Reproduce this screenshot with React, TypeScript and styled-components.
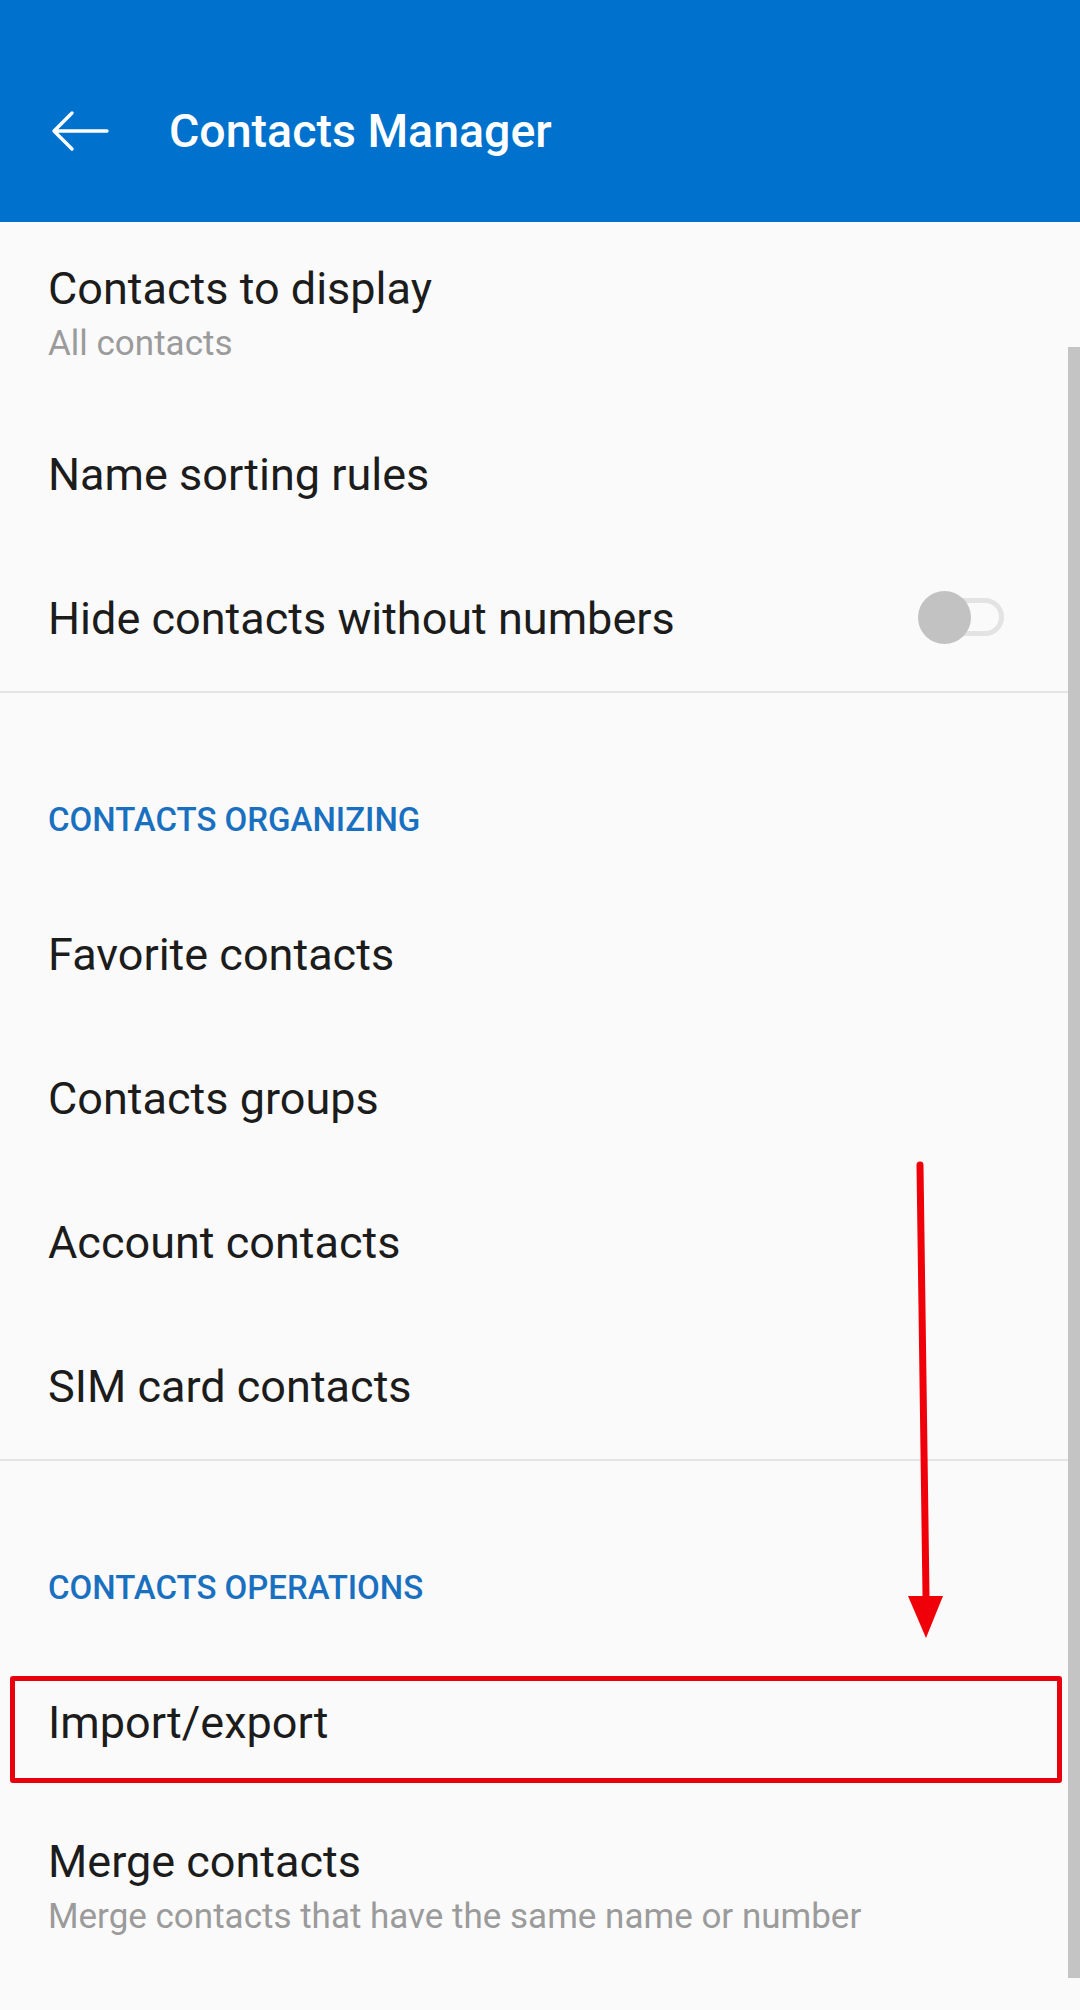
import React from 'react';
import styled, { createGlobalStyle } from 'styled-components';

const GlobalStyle = createGlobalStyle`
  html, body {
    margin: 0;
    padding: 0;
    background: #fafafa;
  }
  body {
    font-family: Roboto, "Liberation Sans", Arial, sans-serif;
  }
`;

const App = () => {
  return (
    <>
      <GlobalStyle />
      <Screen>
        <AppBar>
          <BackButton aria-label="back">
            <svg width="60" height="42" viewBox="0 0 60 42">
              <path
                d="M4 21 H57 M22 3 L4 21 L22 39"
                fill="none"
                stroke="#fff"
                strokeWidth="3.4"
                strokeLinecap="round"
                strokeLinejoin="round"
              />
            </svg>
          </BackButton>
          <Title>Contacts Manager</Title>
        </AppBar>

        <List>
          <Row $tall>
            <RowText>
              <Primary>Contacts to display</Primary>
              <Secondary>All contacts</Secondary>
            </RowText>
          </Row>
          <Row>
            <Primary>Name sorting rules</Primary>
          </Row>
          <Row>
            <Primary>Hide contacts without numbers</Primary>
            <Switch>
              <SwitchTrack />
              <SwitchThumb />
            </Switch>
          </Row>
          <Divider />

          <SectionHeader>CONTACTS ORGANIZING</SectionHeader>
          <Row>
            <Primary>Favorite contacts</Primary>
          </Row>
          <Row>
            <Primary>Contacts groups</Primary>
          </Row>
          <Row>
            <Primary>Account contacts</Primary>
          </Row>
          <Row>
            <Primary>SIM card contacts</Primary>
          </Row>
          <Divider />

          <SectionHeader>CONTACTS OPERATIONS</SectionHeader>
          <Row $highlight>
            <Primary>Import/export</Primary>
          </Row>
          <Row $tall>
            <RowText>
              <Primary>Merge contacts</Primary>
              <Secondary>Merge contacts that have the same name or number</Secondary>
            </RowText>
          </Row>
        </List>

        <ScrollThumb />

        <Pointer width="60" height="490" viewBox="0 0 60 490">
          <path d="M20 5 L26 436" stroke="#f00008" strokeWidth="7" strokeLinecap="round" fill="none" />
          <polygon points="8,436 43,436 26,478" fill="#f00008" />
        </Pointer>
      </Screen>
    </>
  );
};

const Screen = styled.div`
  position: relative;
  width: 1080px;
  height: 2010px;
  overflow: hidden;
  background: #fafafa;
`;

const AppBar = styled.header`
  height: 222px;
  background: #0072ce;
  display: flex;
  align-items: center;
  padding: 40px 0 0 50px;
  box-sizing: border-box;
`;

const BackButton = styled.div`
  width: 60px;
  height: 42px;
  display: flex;
  align-items: center;
  justify-content: center;
  margin-right: 59px;
  svg {
    display: block;
  }
`;

const Title = styled.h1`
  margin: 0;
  color: #ffffff;
  font-family: Roboto, "Liberation Sans", sans-serif;
  font-weight: 500;
  font-size: 46.5px;
  line-height: 54px;
`;

const List = styled.div`
  display: flex;
  flex-direction: column;
`;

const Row = styled.div<{ $tall?: boolean; $highlight?: boolean }>`
  position: relative;
  height: ${(p) => (p.$tall ? '181px' : '144px')};
  display: flex;
  align-items: ${(p) => (p.$tall ? 'flex-start' : 'center')};
  justify-content: space-between;
  padding: ${(p) => (p.$tall ? '41px 76px 0 48px' : '0 76px 0 48px')};
  box-sizing: border-box;

  ${(p) =>
    p.$highlight &&
    `
    &::after {
      content: '';
      position: absolute;
      top: 25px;
      bottom: 12px;
      left: 10px;
      right: 18px;
      border: 5px solid #e8000d;
      border-radius: 3px;
    }
  `}
`;

const RowText = styled.div`
  display: flex;
  flex-direction: column;
`;

const Primary = styled.div`
  color: #1c1c1c;
  font-size: 45px;
  line-height: 52px;
  white-space: nowrap;
`;

const Secondary = styled.div`
  margin-top: 4px;
  color: #9b9b9b;
  font-size: 35px;
  line-height: 50px;
  white-space: nowrap;
`;

const Divider = styled.div`
  height: 2px;
  background: #e4e4e4;
`;

const SectionHeader = styled.div`
  height: 190px;
  padding: 107px 48px 0;
  box-sizing: border-box;
  color: #1a70c0;
  font-size: 33px;
  font-weight: 500;
  line-height: 40px;
`;

const Switch = styled.div`
  position: relative;
  width: 86px;
  height: 53px;
  margin-top: -4px;
`;

const SwitchTrack = styled.div`
  position: absolute;
  right: 0;
  top: 7px;
  width: 74px;
  height: 38px;
  border: 5px solid #e3e3e3;
  border-radius: 19px;
  box-sizing: border-box;
`;

const SwitchThumb = styled.div`
  position: absolute;
  left: 0;
  top: 0;
  width: 53px;
  height: 53px;
  border-radius: 50%;
  background: #c2c2c2;
`;

const ScrollThumb = styled.div`
  position: absolute;
  right: 0;
  top: 347px;
  width: 12px;
  height: 1631px;
  background: #c4c4c4;
`;

const Pointer = styled.svg`
  position: absolute;
  left: 900px;
  top: 1160px;
`;

export default App;
